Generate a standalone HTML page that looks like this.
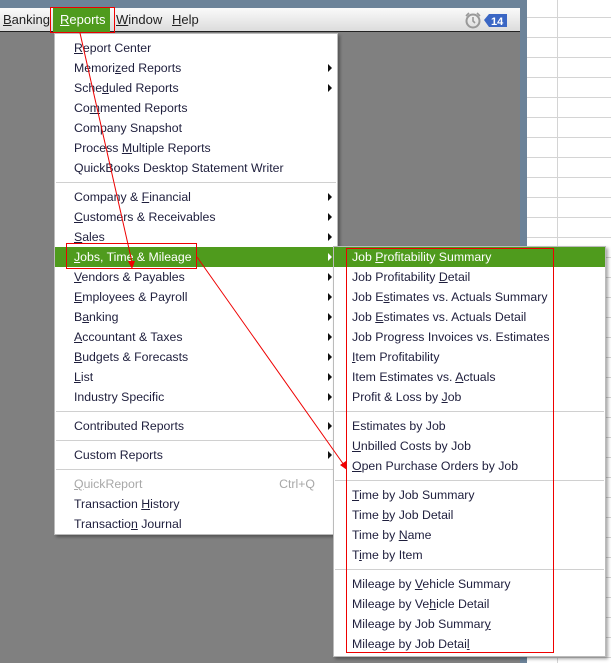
<!DOCTYPE html>
<html><head><style>
*{margin:0;padding:0;box-sizing:border-box}
body{width:611px;height:663px;overflow:hidden;position:relative;background:#808080;font-family:"Liberation Sans",Arial,sans-serif;font-size:12.3px;color:#1e1e3c}
.abs{position:absolute}
.grid{left:526px;top:0;width:85px;height:663px;background-color:#fff;
background-image:linear-gradient(#d4d4d4 1px,transparent 1px),linear-gradient(90deg,#d4d4d4 1px,transparent 1px);
background-size:85px 20px,300px 663px;background-position:0 17px,31px 0;background-repeat:repeat,no-repeat}
.frame{left:520px;top:0;width:7px;height:663px;background:#6c8399}
.top{left:0;top:0;width:520px;height:8px;background:#6c8399}
.bar{left:0;top:8px;width:520px;height:24px;background:linear-gradient(#fafafa,#dcdcdc);border-bottom:1px solid #222}
.bar span{position:absolute;top:4px;font-size:13px;color:#222}
.menu{background:#fff;border:1px solid #bbb;box-shadow:2px 2px 3px rgba(0,0,0,.35)}
.it{position:absolute;left:0;right:0;height:20px;line-height:20px;white-space:nowrap}
.m .it{padding-left:19px}
.s .it{padding-left:18px}
.hl{background:#4f9b1d;color:#fff}
.ar{position:absolute;right:5px;top:6px;width:0;height:0;border-left:4px solid #111;border-top:4px solid transparent;border-bottom:4px solid transparent}
.hl .ar{border-left-color:#fff}
.sep{position:absolute;left:1px;right:1px;height:1px;background:#d0d0d0}
.dis{color:#a8a8a8}
u{text-decoration:underline}
</style></head><body>
<div class="abs top"></div>
<div class="abs grid"></div>
<div class="abs frame"></div>
<div class="abs bar">
<span style="left:3px"><u>B</u>anking</span>
<div class="abs" style="left:53px;top:0px;width:57px;height:24px;background:#4f9b1d"></div>
<span style="left:60px;color:#fff"><u>R</u>eports</span>
<span style="left:116px"><u>W</u>indow</span>
<span style="left:172px"><u>H</u>elp</span>
<svg class="abs" style="left:462px;top:2px" width="50" height="20"><circle cx="11" cy="11" r="6.5" fill="none" stroke="#999" stroke-width="2"/><path d="M11 7v4l2 2M4 6l3-3M18 6l-3-3" stroke="#999" stroke-width="1.6" fill="none"/><path d="M22 10l5-6h18v13h-18z" fill="#3a66c4"/><text x="29" y="15" font-size="11" font-weight="bold" fill="#fff" font-family="Liberation Sans">14</text></svg>
</div>
<div class="abs" style="left:50px;top:7px;width:65px;height:26px;border:1px solid #e00"></div>

<div class="abs menu m" style="left:54px;top:33px;width:284px;height:502px">
<div class="it" style="top:4px"><u>R</u>eport Center</div>
<div class="it" style="top:24px">Memori<u>z</u>ed Reports<i class="ar"></i></div>
<div class="it" style="top:44px">Sche<u>d</u>uled Reports<i class="ar"></i></div>
<div class="it" style="top:64px">Co<u>m</u>mented Reports</div>
<div class="it" style="top:84px">Company Snapshot</div>
<div class="it" style="top:104px">Process <u>M</u>ultiple Reports</div>
<div class="it" style="top:124px">QuickBooks Desktop Statement Writer</div>
<div class="sep" style="top:148px"></div>
<div class="it" style="top:153px">Company &amp; <u>F</u>inancial<i class="ar"></i></div>
<div class="it" style="top:173px"><u>C</u>ustomers &amp; Receivables<i class="ar"></i></div>
<div class="it" style="top:193px"><u>S</u>ales<i class="ar"></i></div>
<div class="it hl" style="top:213px"><u>J</u>obs, Time &amp; Mileage<i class="ar"></i></div>
<div class="it" style="top:233px"><u>V</u>endors &amp; Payables<i class="ar"></i></div>
<div class="it" style="top:253px"><u>E</u>mployees &amp; Payroll<i class="ar"></i></div>
<div class="it" style="top:273px">B<u>a</u>nking<i class="ar"></i></div>
<div class="it" style="top:293px"><u>A</u>ccountant &amp; Taxes<i class="ar"></i></div>
<div class="it" style="top:313px"><u>B</u>udgets &amp; Forecasts<i class="ar"></i></div>
<div class="it" style="top:333px"><u>L</u>ist<i class="ar"></i></div>
<div class="it" style="top:353px">Industry Specific<i class="ar"></i></div>
<div class="sep" style="top:377px"></div>
<div class="it" style="top:382px">Contributed Reports<i class="ar"></i></div>
<div class="sep" style="top:406px"></div>
<div class="it" style="top:411px">Custom Reports<i class="ar"></i></div>
<div class="sep" style="top:435px"></div>
<div class="it dis" style="top:440px"><u>Q</u>uickReport<span style="position:absolute;right:22px">Ctrl+Q</span></div>
<div class="it" style="top:460px">Transaction <u>H</u>istory</div>
<div class="it" style="top:480px">Transactio<u>n</u> Journal</div>
</div>
<div class="abs" style="left:66px;top:243px;width:131px;height:26px;border:1px solid #e00"></div>

<div class="abs menu s" style="left:333px;top:246px;width:273px;height:411px">
<div class="it hl" style="top:0px">Job <u>P</u>rofitability Summary</div>
<div class="it" style="top:20px">Job Profitability <u>D</u>etail</div>
<div class="it" style="top:40px">Job E<u>s</u>timates vs. Actuals Summary</div>
<div class="it" style="top:60px">Job <u>E</u>stimates vs. Actuals Detail</div>
<div class="it" style="top:80px">Job Progress Invoices vs. Estimates</div>
<div class="it" style="top:100px"><u>I</u>tem Profitability</div>
<div class="it" style="top:120px">Item Estimates vs. <u>A</u>ctuals</div>
<div class="it" style="top:140px">Profit &amp; Loss by <u>J</u>ob</div>
<div class="sep" style="top:164px"></div>
<div class="it" style="top:169px">Estimates by Job</div>
<div class="it" style="top:189px"><u>U</u>nbilled Costs by Job</div>
<div class="it" style="top:209px"><u>O</u>pen Purchase Orders by Job</div>
<div class="sep" style="top:233px"></div>
<div class="it" style="top:238px"><u>T</u>ime by Job Summary</div>
<div class="it" style="top:258px">Time <u>b</u>y Job Detail</div>
<div class="it" style="top:278px">Time by <u>N</u>ame</div>
<div class="it" style="top:298px">T<u>i</u>me by Item</div>
<div class="sep" style="top:322px"></div>
<div class="it" style="top:327px">Mileage by <u>V</u>ehicle Summary</div>
<div class="it" style="top:347px">Mileage by Ve<u>h</u>icle Detail</div>
<div class="it" style="top:367px">Mileage by Job Summar<u>y</u></div>
<div class="it" style="top:387px">Mileage by Job Detai<u>l</u></div>
</div>
<div class="abs" style="left:346px;top:248px;width:208px;height:405px;border:1px solid #e00"></div>

<svg class="abs" style="left:0;top:0" width="611" height="663">
<line x1="80" y1="33" x2="132" y2="262" stroke="#e00" stroke-width="1"/>
<path d="M128 261l7 0-3 8z" fill="#e00"/>
<line x1="197" y1="257" x2="344" y2="465" stroke="#e00" stroke-width="1"/>
<path d="M340 465l6-4 1 9z" fill="#e00"/>
</svg>
</body></html>
